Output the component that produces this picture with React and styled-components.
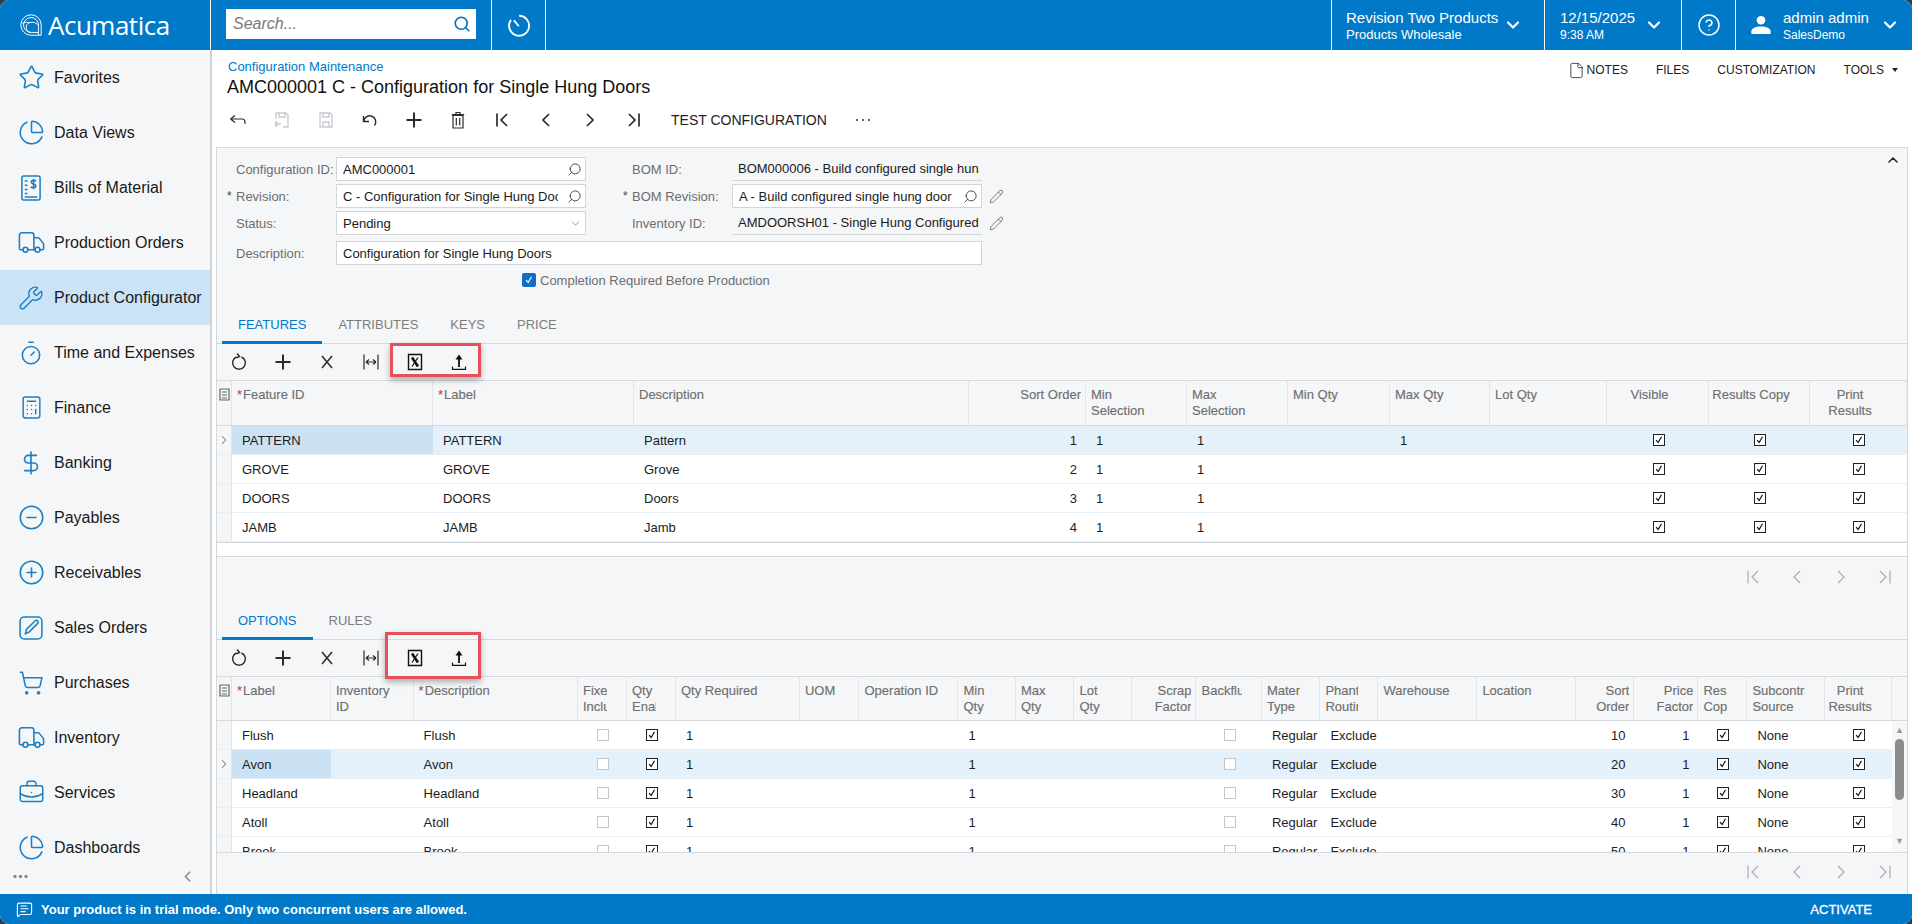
import styled, { createGlobalStyle } from "styled-components";
import {
  Star, ChartPie, Truck, Wrench, Timer, Calculator, DollarSign, CircleMinus, CirclePlus,
  ShoppingCart, BriefcaseBusiness, ChevronDown, ChevronUp, ChevronLeft, ChevronRight, CircleHelp,
  Search as SearchIcon, Pencil, File as FileIcon, MessageSquareText,
} from "lucide-react";

const GlobalStyle = createGlobalStyle`
  html, body { margin: 0; padding: 0; height: 100%; background: #2f3b47; }
  #root { height: 100%; }
  * { box-sizing: border-box; }
`;

const BLUE = "#0079c9";
const PANEL = "#f5f6f8";
const LINE = "#d6d9dc";

// ---------- small drawn icons ----------

const Glyph = styled.svg.attrs((p) => ({
  viewBox: "0 0 20 20",
  fill: p.fill || "none",
  stroke: p.stroke || "currentColor",
  strokeWidth: p.strokeWidth || 1.4,
}))`
  width: ${(p) => p.$size || 20}px;
  height: ${(p) => p.$size || 20}px;
  color: ${(p) => p.$color || "#2b2b2b"};
  flex: none;
`;

const BackGlyph = () => <Glyph strokeWidth={1.2}><path d="M2.5 9 7 5.5M2.5 9 7 12.5M2.5 9H14a3 3 0 0 1 3 3v2" /></Glyph>;
const SaveCloseGlyph = () => (
  <Glyph $color="#c8ccd0"><path d="M4 9V3h10l2 2v12h-5M7 3v4h6V3M3 14h6M3 14l2.5-2M3 14l2.5 2M4 11v6" /></Glyph>
);
const SaveGlyph = () => (
  <Glyph $color="#c8ccd0"><path d="M4 3h10l2 2v12H4zM7 3v4h6V3M7 17v-5h6v5" /></Glyph>
);
const UndoGlyph = () => <Glyph><path d="M3.5 6v5.5H9M3.8 11.2A6 6 0 1 1 14.5 15.5" /></Glyph>;
const PlusGlyph = () => <Glyph strokeWidth={2}><path d="M10 2.5v15M2.5 10h15" /></Glyph>;
const TrashGlyph = () => <Glyph strokeWidth={1.2}><path d="M5 5.5h10V18H5zM3.8 4.6h12.4M8 4.6V2.5h4v2.1M8.3 8v7.5M11.7 8v7.5" /></Glyph>;
const FirstGlyph = ({ color }) => <Glyph $color={color} strokeWidth={color ? 1.2 : 1.7}><path d="M5 3.5v13M15 4l-6 6 6 6" /></Glyph>;
const PrevGlyph = ({ color }) => <Glyph $color={color} strokeWidth={color ? 1.2 : 1.7}><path d="M13 4l-6 6 6 6" /></Glyph>;
const NextGlyph = ({ color }) => <Glyph $color={color} strokeWidth={color ? 1.2 : 1.7}><path d="M7 4l6 6-6 6" /></Glyph>;
const LastGlyph = ({ color }) => <Glyph $color={color} strokeWidth={color ? 1.2 : 1.7}><path d="M15 3.5v13M5 4l6 6-6 6" /></Glyph>;
const DotsGlyph = () => (
  <Glyph stroke="none" fill="currentColor"><circle cx="4" cy="10" r="1" /><circle cx="10" cy="10" r="1" /><circle cx="16" cy="10" r="1" /></Glyph>
);
const RefreshGlyph = () => <Glyph><path d="M7.5 5a6.4 6.4 0 1 0 5 0M8 1.5l2.6 3-3 1.4" /></Glyph>;
const CrossGlyph = () => <Glyph strokeWidth={1.5}><path d="M5 4 15 16M15 4 5 16" /></Glyph>;
const FitGlyph = () => <Glyph strokeWidth={1.2}><path d="M3 2.5v15M17 2.5v15M5 10h10M5 10l3-2.5M5 10l3 2.5M15 10l-3-2.5M15 10l-3 2.5" /></Glyph>;
const ExcelGlyph = () => (
  <Glyph $color="#111">
    <path d="M3.5 2.5h13v15h-13z" />
    <path d="M7 5.5 13 14.5" strokeWidth={2.6} />
    <path d="M13 5.5 7 14.5" strokeWidth={1.2} />
  </Glyph>
);
const UploadGlyph = () => (
  <Glyph $color="#111">
    <path d="M10 15V6" strokeWidth={1.8} />
    <path d="M10 2.5 13.5 7.5h-7z" fill="currentColor" stroke="none" />
    <path d="M3.5 14.5v2.8h13v-2.8" strokeWidth={1.2} />
  </Glyph>
);
const HistoryGlyph = () => (
  <Glyph $size={25} $color="#fff" strokeWidth={1.5}><path d="M10.5 2.2a8 8 0 1 1-6.5 3.3M10.2 10.6 6.3 5.8" /></Glyph>
);
const UserGlyph = () => (
  <Glyph $size={24} $color="#fff" stroke="none" fill="currentColor">
    <circle cx="10" cy="6" r="3.6" />
    <path d="M2 17.5v-2.2c0-2.6 3.4-4 8-4s8 1.4 8 4v2.2z" />
  </Glyph>
);
const BillsGlyph = () => (
  <Glyph $size={28} $color="#1b7fc4" strokeWidth={1.1}>
    <rect x="3.5" y="1.5" width="13" height="17" rx="1.4" />
    <path d="M5.5 5h2M5.5 8h2M5.5 11h2M5.5 14h2M5.5 16.5h9" />
    <path d="M13.5 5.2c-.6-.9-3.3-1-3.4.6-.1 1.7 3.6 1 3.4 2.9-.2 1.5-3 1.4-3.7.4M11.8 3.5v7.4" />
  </Glyph>
);
const SalesGlyph = () => (
  <Glyph $size={28} $color="#1b7fc4" strokeWidth={1.1}>
    <rect x="2.2" y="2.2" width="15.6" height="15.6" rx="3" />
    <path d="M6 14l.8-3 6-6c.7-.7 1.6-.7 2 0 .5.5.4 1.3-.2 1.9l-6 6z" />
  </Glyph>
);
const LogoGlyph = () => (
  <Glyph $size={24} $color="#fff" strokeWidth={0.8}>
    <path d="M18.5 18.5H10a8.5 8.5 0 1 1 8.5-8.5z" />
    <path d="M16.2 18.5V10A6.2 6.2 0 1 0 10 16.2" />
    <path d="M16.2 16.2H10.5a4.2 4.2 0 0 1-1.5-8.2c2.7-.9 5.5.2 7.2 2.2M2.8 8.5c2.5-1 4.6-.8 6.2-.5" />
  </Glyph>
);
const CheckGlyph = () => (
  <svg viewBox="0 0 12 12" width="10" height="10" fill="none" stroke="currentColor" strokeWidth="1.4"><path d="M2.5 6.2 5 9l4-7" /></svg>
);

// ---------- shell ----------

const Shell = styled.div`
  display: flex;
  flex-direction: column;
  height: 924px;
  background: #fff;
  border-radius: 9px;
  overflow: hidden;
  font-family: "Liberation Sans", Arial, sans-serif;
  font-size: 13px;
  color: #1c1c1c;
`;

const TopBar = styled.header`
  display: flex;
  height: 50px;
  flex: none;
  background: ${BLUE};
  color: #fff;
`;

const TopCell = styled.div`
  display: flex;
  align-items: center;
  flex: ${(p) => (p.$grow ? "1" : "none")};
  width: ${(p) => (p.$width ? `${p.$width}px` : "auto")};
  padding: ${(p) => p.$pad || "0"};
  justify-content: ${(p) => (p.$center ? "center" : "flex-start")};
  border-left: ${(p) => (p.$noLine ? "none" : "1px solid #fff")};
`;

const Logo = styled.div`
  display: flex;
  align-items: center;
  gap: 5px;
  font-family: "Open Sans", sans-serif;
  font-size: 26px;
  letter-spacing: -0.5px;
`;

const SearchBox = styled.div`
  display: flex;
  align-items: center;
  justify-content: space-between;
  width: 250px;
  height: 30px;
  background: #fff;
  padding: 0 5px 0 7px;
  font-size: 16px;
  font-style: italic;
  color: #7b7b7b;
  margin-top: -2px;
`;

const TopText = styled.div`
  flex: 1;
  display: flex;
  flex-direction: column;
  gap: 2px;
  white-space: nowrap;
  margin-left: ${(p) => p.$indent || 0}px;
`;

const TopMain = styled.div`
  font-size: 15px;
  line-height: 17px;
`;

const TopSub = styled.div`
  font-size: ${(p) => p.$size || 12}px;
  line-height: 14px;
`;

const Body = styled.div`
  display: flex;
  flex: 1;
  min-height: 0;
`;

const Footer = styled.footer`
  display: flex;
  align-items: center;
  height: 30px;
  flex: none;
  background: ${BLUE};
  color: #fff;
  padding: 0 40px 0 16px;
  gap: 8px;
  font-weight: bold;
  font-size: 13px;
`;

const Activate = styled.div`
  margin-left: auto;
  font-weight: normal;
  font-size: 13px;
  -webkit-text-stroke: 0.3px #fff;
`;

// ---------- sidebar ----------

const Sidebar = styled.aside`
  display: flex;
  flex-direction: column;
  width: 212px;
  flex: none;
  background: ${PANEL};
  border-right: 2px solid #cfd2d6;
`;

const NavList = styled.nav`
  flex: 1;
  min-height: 0;
  overflow: hidden;
`;

const NavItem = styled.div`
  display: flex;
  align-items: center;
  height: 55px;
  background: ${(p) => (p.$active ? "#cbe3f6" : "transparent")};
  font-size: 16px;
  color: #1a1a1a;
  white-space: nowrap;
`;

const NavIcon = styled.span`
  display: flex;
  align-items: center;
  justify-content: center;
  width: 54px;
  padding-left: 8px;
  flex: none;
  color: #1b7fc4;
`;

const SideFoot = styled.div`
  display: flex;
  align-items: center;
  justify-content: space-between;
  height: 30px;
  flex: none;
  padding: 0 14px 6px 12px;
  color: #8a8a8a;
`;

const navItems = [
  ["Favorites", <Star size={27} strokeWidth={1.4} />],
  ["Data Views", <ChartPie size={27} strokeWidth={1.4} />],
  ["Bills of Material", <BillsGlyph />],
  ["Production Orders", <Truck size={29} strokeWidth={1.3} />],
  ["Product Configurator", <Wrench size={26} strokeWidth={1.3} />, true],
  ["Time and Expenses", <Timer size={26} strokeWidth={1.4} />],
  ["Finance", <Calculator size={25} strokeWidth={1.4} />],
  ["Banking", <DollarSign size={26} strokeWidth={1.5} />],
  ["Payables", <CircleMinus size={27} strokeWidth={1.4} />],
  ["Receivables", <CirclePlus size={27} strokeWidth={1.4} />],
  ["Sales Orders", <SalesGlyph />],
  ["Purchases", <ShoppingCart size={26} strokeWidth={1.4} />],
  ["Inventory", <Truck size={29} strokeWidth={1.3} />],
  ["Services", <BriefcaseBusiness size={27} strokeWidth={1.3} />],
  ["Dashboards", <ChartPie size={27} strokeWidth={1.4} />],
];

// ---------- page header ----------

const Content = styled.main`
  flex: 1;
  min-width: 0;
  display: flex;
  flex-direction: column;
  padding: 0 4px;
`;

const PageHead = styled.div`
  height: 97px;
  flex: none;
  padding-top: 8px;
`;

const TitleRow = styled.div`
  display: flex;
  justify-content: space-between;
  height: 41px;
  padding-left: 12px;
`;

const Crumb = styled.div`
  font-size: 13px;
  line-height: 17px;
  color: ${BLUE};
`;

const Title = styled.h1`
  margin: 0;
  font-size: 18px;
  font-weight: normal;
  line-height: 24px;
  color: #111;
  margin-left: -1px;
`;

const HeadActions = styled.div`
  display: flex;
  align-items: center;
  gap: 28px;
  height: 16px;
  margin-top: 4px;
  padding-right: 10px;
  font-size: 12px;
  color: #1c1c1c;
`;

const HeadAction = styled.span`
  display: flex;
  align-items: center;
  gap: 2px;
`;

const Caret = styled.span`
  width: 0;
  height: 0;
  margin-left: 6px;
  border-left: 3.5px solid transparent;
  border-right: 3.5px solid transparent;
  border-top: 4px solid #222;
`;

const Toolbar = styled.div`
  display: flex;
  align-items: center;
  height: 36px;
  margin-top: ${(p) => p.$top || 0}px;
  position: relative;
  flex: none;
`;

const ToolBtn = styled.span`
  display: flex;
  align-items: center;
  justify-content: center;
  width: 44px;
  height: 36px;
  flex: none;
`;

const TextBtn = styled.span`
  font-size: 14px;
  color: #222;
  margin-left: 15px;
  margin-right: 14px;
  white-space: nowrap;
`;

const RedBox = styled.div`
  position: absolute;
  left: ${(p) => p.$left}px;
  top: ${(p) => p.$top}px;
  width: ${(p) => p.$width}px;
  height: ${(p) => p.$height}px;
  border: 3px solid #e5505a;
  box-shadow: 0 3px 6px rgba(0, 0, 0, 0.3);
  pointer-events: none;
`;

// ---------- form ----------

const Panel = styled.section`
  flex: 1;
  min-height: 0;
  display: flex;
  flex-direction: column;
  background: ${PANEL};
  border: 1px solid ${LINE};
  border-bottom: none;
  position: relative;
`;

const Collapse = styled.span`
  position: absolute;
  right: 6px;
  top: 4px;
  color: #222;
`;

const Form = styled.div`
  height: 159px;
  flex: none;
  padding: 9px 0 0 10px;
  display: flex;
  flex-direction: column;
  gap: 3px;
`;

const FormRow = styled.div`
  display: flex;
  height: 24px;
  flex: none;
  align-items: center;
  margin-top: ${(p) => p.$top || 0}px;
`;

const FieldLabel = styled.label`
  display: flex;
  width: 109px;
  flex: none;
  color: #6d6d6d;
  font-size: 13px;
  white-space: nowrap;
`;

const LabelStar = styled.span`
  width: 9px;
  flex: none;
  color: #444;
  font-size: 12px;
`;

const Field = styled.div`
  display: flex;
  align-items: center;
  width: ${(p) => p.$width || 250}px;
  height: 24px;
  flex: none;
  padding: 0 3px 0 6px;
  background: ${(p) => (p.$plain ? "transparent" : "#fff")};
  border: 1px solid #d3d6d9;
  border-width: ${(p) => (p.$plain ? "0 0 1px" : "1px")};
  color: #1a1a1a;
`;

const FieldText = styled.span`
  flex: 1;
  min-width: 0;
  overflow: hidden;
  white-space: nowrap;
  margin-right: ${(p) => p.$gap || 0}px;
`;

const FieldGap = styled.span`
  width: 37px;
  flex: none;
`;

const EditPencil = styled.span`
  display: flex;
  margin-left: 7px;
  color: #555;
`;

const FlippedSearch = styled(SearchIcon)`
  transform: scaleX(-1);
  color: #444;
  flex: none;
`;

const CheckRow = styled.div`
  display: flex;
  align-items: center;
  gap: 4px;
  margin: 5px 0 0 295px;
  height: 14px;
  color: #6d6d6d;
  white-space: nowrap;
`;

const BlueCheck = styled.span`
  display: flex;
  align-items: center;
  justify-content: center;
  width: 14px;
  height: 14px;
  background: #0f6fc6;
  border-radius: 2px;
  color: #fff;
`;

// ---------- tabs ----------

const Tabs = styled.div`
  display: flex;
  height: 37px;
  flex: none;
  padding-left: 5px;
  border-bottom: 1px solid ${LINE};
`;

const Tab = styled.div`
  display: flex;
  align-items: center;
  padding: 0 16px;
  height: 37px;
  font-size: 13px;
  color: ${(p) => (p.$active ? BLUE : "#7d7d7d")};
  border-bottom: 3px solid ${(p) => (p.$active ? BLUE : "transparent")};
`;

// ---------- grids ----------

const GridWrap = styled.div`
  flex: none;
  border-top: 1px solid ${LINE};
`;

const GridLine = styled.div`
  display: grid;
  grid-template-columns: 15px ${(p) => p.$cols};
  height: ${(p) => p.$height}px;
  background: ${(p) => (p.$selected ? "#e4f1fa" : p.$plainBg ? "transparent" : "#fff")};
  border-bottom: 1px solid ${(p) => (p.$head ? LINE : "#e6eff5")};
  overflow: hidden;
`;

const Gutter = styled.div`
  display: flex;
  align-items: ${(p) => (p.$head ? "flex-start" : "center")};
  justify-content: center;
  padding-top: ${(p) => (p.$head ? "7px" : "0")};
  background: ${PANEL};
  border-right: 1px solid #e1e4e7;
  color: #555;
`;

const headPad = { right: "6px 4px 0 0", center: "6px 16px 0 0" };

const HeadCell = styled.div`
  padding: ${(p) => headPad[p.$align] || "6px 19px 0 5px"};
  border-right: 1px solid #e4e6e9;
  min-width: 0;
`;

const HeadLines = styled.div`
  overflow: hidden;
  text-align: ${(p) => p.$align || "left"};
  font-size: 13px;
  line-height: 16px;
  color: #6f6f6f;
  -webkit-text-stroke: 0.15px #6f6f6f;
  white-space: nowrap;
`;

const HeadStar = styled.span`
  color: #e03c3c;
  margin-right: 1px;
`;

const BodyCell = styled.div`
  display: flex;
  align-items: center;
  justify-content: ${(p) => (p.$align === "right" ? "flex-end" : p.$align === "center" ? "center" : "flex-start")};
  padding: ${(p) => (p.$align === "right" ? "0 9px" : "0 9px 0 10px")};
  background: ${(p) => (p.$current ? "#cbe2f5" : "transparent")};
  overflow: hidden;
  white-space: nowrap;
  color: #1c1c1c;
`;

const Tick = styled.span`
  display: flex;
  align-items: center;
  justify-content: center;
  width: 12px;
  height: 12px;
  flex: none;
  background: #fff;
  border: 1px solid ${(p) => (p.$on ? "#222" : "#c4c7ca")};
  color: #111;
`;

const Filler = styled.div`
  height: 15px;
  flex: none;
  background: #fff;
  border-top: 1px solid ${LINE};
  border-bottom: 1px solid ${LINE};
`;

const Pager = styled.div`
  display: flex;
  justify-content: flex-end;
  height: ${(p) => p.$height}px;
  flex: none;
  padding-top: ${(p) => p.$top}px;
`;

const ScrollArea = styled.div`
  display: flex;
  height: 132px;
  flex: none;
  border-bottom: 1px solid ${LINE};
  overflow: hidden;
`;

const ScrollRows = styled.div`
  width: 1675px;
  flex: none;
`;

const ScrollBar = styled.div`
  flex: 1;
  display: flex;
  flex-direction: column;
  align-items: center;
  padding-top: 5px;
  color: #9a9a9a;
  font-size: 9px;
  line-height: 9px;
`;

const ScrollThumb = styled.div`
  width: 9px;
  height: 61px;
  margin: 4px 0 37px;
  background: #8c8c8c;
  border-radius: 5px;
`;

const featureCols = [
  { w: 201, h: ["Feature ID"], req: true },
  { w: 201, h: ["Label"], req: true },
  { w: 335, h: ["Description"] },
  { w: 117, h: ["Sort Order"], align: "right" },
  { w: 101, h: ["Min", "Selection"] },
  { w: 101, h: ["Max", "Selection"] },
  { w: 102, h: ["Min Qty"] },
  { w: 100, h: ["Max Qty"] },
  { w: 117, h: ["Lot Qty"] },
  { w: 102, h: ["Visible"], align: "center", cell: "center" },
  { w: 101, h: ["Results Copy"], align: "center", cell: "center" },
  { w: 97, h: ["Print", "Results"], align: "center", cell: "center" },
];

const featureRows = [
  ["PATTERN", "PATTERN", "Pattern", "1", "1", "1", "", "1", "", true, true, true],
  ["GROVE", "GROVE", "Grove", "2", "1", "1", "", "", "", true, true, true],
  ["DOORS", "DOORS", "Doors", "3", "1", "1", "", "", "", true, true, true],
  ["JAMB", "JAMB", "Jamb", "4", "1", "1", "", "", "", true, true, true],
];

const optionCols = [
  { w: 99, h: ["Label"], req: true },
  { w: 82.6, h: ["Inventory", "ID"] },
  { w: 164.4, h: ["Description"], req: true },
  { w: 49, h: ["Fixed", "Included"], cell: "center" },
  { w: 49, h: ["Qty", "Enabled"], cell: "center" },
  { w: 124, h: ["Qty Required"] },
  { w: 59.5, h: ["UOM"] },
  { w: 99, h: ["Operation ID"] },
  { w: 57.5, h: ["Min", "Qty"] },
  { w: 58.5, h: ["Max", "Qty"] },
  { w: 58, h: ["Lot", "Qty"] },
  { w: 64, h: ["Scrap", "Factor"], align: "right" },
  { w: 65.4, h: ["Backflush"], cell: "center" },
  { w: 58.5, h: ["Material", "Type"] },
  { w: 58, h: ["Phantom", "Routing"] },
  { w: 99, h: ["Warehouse"] },
  { w: 99, h: ["Location"] },
  { w: 58, h: ["Sort", "Order"], align: "right" },
  { w: 64, h: ["Price", "Factor"], align: "right" },
  { w: 49, h: ["Result", "Copy"], cell: "center" },
  { w: 78, h: ["Subcontract", "Source"] },
  { w: 66.5, h: ["Print", "Results"], align: "center", cell: "center" },
];

const optionRows = ["Flush", "Avon", "Headland", "Atoll", "Brook"].map((name, i) => [
  name, "", name, false, true, "1", "", "", "1", "", "", "", false,
  "Regular", "Exclude", "", "", String((i + 1) * 10), "1", true, "None", true,
]);

const colTemplate = (cols) => cols.map((c) => `${c.w}px`).join(" ");

function HeaderRow({ cols, height }) {
  return (
    <GridLine $cols={colTemplate(cols)} $height={height} $head $plainBg>
      <Gutter $head>
        <svg width="11" height="13" viewBox="0 0 11 13" fill="none" stroke="#666" strokeWidth="1.2">
          <path d="M1 1h9v11H1zM3 4h5M3 7h5M3 10h5" />
        </svg>
      </Gutter>
      {cols.map((c) => (
        <HeadCell key={c.h.join()} $align={c.align}>
          <HeadLines $align={c.align}>
            {c.h.map((line, i) => (
              <div key={line}>
                {c.req && i === 0 && <HeadStar>*</HeadStar>}
                {line}
              </div>
            ))}
          </HeadLines>
        </HeadCell>
      ))}
    </GridLine>
  );
}

function DataRow({ cols, values, selected }) {
  return (
    <GridLine $cols={colTemplate(cols)} $height={29} $selected={selected}>
      <Gutter>{selected && <ChevronRight size={14} strokeWidth={1.6} />}</Gutter>
      {values.map((v, i) => (
        <BodyCell key={i} $align={cols[i].cell || cols[i].align} $current={selected && i === 0}>
          {typeof v === "boolean" ? <Tick $on={v}>{v && <CheckGlyph />}</Tick> : v}
        </BodyCell>
      ))}
    </GridLine>
  );
}

function GridTools({ box }) {
  return (
    <Toolbar>
      <ToolBtn><RefreshGlyph /></ToolBtn>
      <ToolBtn><PlusGlyph /></ToolBtn>
      <ToolBtn><CrossGlyph /></ToolBtn>
      <ToolBtn><FitGlyph /></ToolBtn>
      <ToolBtn><ExcelGlyph /></ToolBtn>
      <ToolBtn><UploadGlyph /></ToolBtn>
      <RedBox $left={box.left} $top={box.top} $width={box.width} $height={box.height} />
    </Toolbar>
  );
}

function PagerIcons({ height, top }) {
  const c = "#a9adb1";
  return (
    <Pager $height={height} $top={top}>
      <ToolBtn><FirstGlyph color={c} /></ToolBtn>
      <ToolBtn><PrevGlyph color={c} /></ToolBtn>
      <ToolBtn><NextGlyph color={c} /></ToolBtn>
      <ToolBtn><LastGlyph color={c} /></ToolBtn>
    </Pager>
  );
}

export default function App() {
  return (
    <>
      <GlobalStyle />
      <Shell>
        <TopBar>
          <TopCell $width={210} $pad="0 0 0 19px" $noLine>
            <Logo><LogoGlyph />Acumatica</Logo>
          </TopCell>
          <TopCell $width={281} $pad="0 0 0 15px">
            <SearchBox>Search...<SearchIcon size={18} color="#0a6fb8" strokeWidth={2.2} /></SearchBox>
          </TopCell>
          <TopCell $width={54} $center><HistoryGlyph /></TopCell>
          <TopCell $grow />
          <TopCell $width={213} $pad="0 21px 0 14px">
            <TopText>
              <TopMain>Revision Two Products</TopMain>
              <TopSub $size={13}>Products Wholesale</TopSub>
            </TopText>
            <ChevronDown size={20} strokeWidth={2.6} />
          </TopCell>
          <TopCell $width={137} $pad="0 17px 0 15px">
            <TopText>
              <TopMain>12/15/2025</TopMain>
              <TopSub>9:38 AM</TopSub>
            </TopText>
            <ChevronDown size={20} strokeWidth={2.6} />
          </TopCell>
          <TopCell $width={54} $center><CircleHelp size={24} strokeWidth={1.5} /></TopCell>
          <TopCell $width={177} $pad="0 12px 0 13px">
            <UserGlyph />
            <TopText $indent={10}>
              <TopMain>admin admin</TopMain>
              <TopSub>SalesDemo</TopSub>
            </TopText>
            <ChevronDown size={20} strokeWidth={2.6} />
          </TopCell>
        </TopBar>

        <Body>
          <Sidebar>
            <NavList>
              {navItems.map(([label, icon, active]) => (
                <NavItem key={label} $active={active}>
                  <NavIcon>{icon}</NavIcon>
                  {label}
                </NavItem>
              ))}
            </NavList>
            <SideFoot>
              <Glyph $size={17} $color="#8a8a8a" stroke="none" fill="currentColor">
                <circle cx="3.5" cy="10" r="2" /><circle cx="10" cy="10" r="2" /><circle cx="16.5" cy="10" r="2" />
              </Glyph>
              <ChevronLeft size={17} strokeWidth={2.4} />
            </SideFoot>
          </Sidebar>

          <Content>
            <PageHead>
              <TitleRow>
                <div>
                  <Crumb>Configuration Maintenance</Crumb>
                  <Title>AMC000001 C - Configuration for Single Hung Doors</Title>
                </div>
                <HeadActions>
                  <HeadAction><FileIcon size={17} strokeWidth={1.1} />NOTES</HeadAction>
                  <HeadAction>FILES</HeadAction>
                  <HeadAction>CUSTOMIZATION</HeadAction>
                  <HeadAction>TOOLS<Caret /></HeadAction>
                </HeadActions>
              </TitleRow>
              <Toolbar $top={3}>
                <ToolBtn><BackGlyph /></ToolBtn>
                <ToolBtn><SaveCloseGlyph /></ToolBtn>
                <ToolBtn><SaveGlyph /></ToolBtn>
                <ToolBtn><UndoGlyph /></ToolBtn>
                <ToolBtn><PlusGlyph /></ToolBtn>
                <ToolBtn><TrashGlyph /></ToolBtn>
                <ToolBtn><FirstGlyph /></ToolBtn>
                <ToolBtn><PrevGlyph /></ToolBtn>
                <ToolBtn><NextGlyph /></ToolBtn>
                <ToolBtn><LastGlyph /></ToolBtn>
                <TextBtn>TEST CONFIGURATION</TextBtn>
                <ToolBtn><DotsGlyph /></ToolBtn>
              </Toolbar>
            </PageHead>

            <Panel>
              <Collapse><ChevronUp size={16} strokeWidth={2.2} /></Collapse>
              <Form>
                <FormRow>
                  <FieldLabel><LabelStar />Configuration ID:</FieldLabel>
                  <Field><FieldText>AMC000001</FieldText><FlippedSearch size={15} strokeWidth={1.5} /></Field>
                  <FieldGap />
                  <FieldLabel><LabelStar />BOM ID:</FieldLabel>
                  <Field $plain><FieldText>BOM000006 - Build configured single hung door</FieldText></Field>
                </FormRow>
                <FormRow>
                  <FieldLabel><LabelStar>*</LabelStar>Revision:</FieldLabel>
                  <Field><FieldText $gap={9}>C - Configuration for Single Hung Doors</FieldText><FlippedSearch size={15} strokeWidth={1.5} /></Field>
                  <FieldGap />
                  <FieldLabel><LabelStar>*</LabelStar>BOM Revision:</FieldLabel>
                  <Field><FieldText $gap={9}>A - Build configured single hung door</FieldText><FlippedSearch size={15} strokeWidth={1.5} /></Field>
                  <EditPencil><Pencil size={15} strokeWidth={1.2} /></EditPencil>
                </FormRow>
                <FormRow>
                  <FieldLabel><LabelStar />Status:</FieldLabel>
                  <Field><FieldText>Pending</FieldText><ChevronDown size={13} color="#777" strokeWidth={1.4} /></Field>
                  <FieldGap />
                  <FieldLabel><LabelStar />Inventory ID:</FieldLabel>
                  <Field $plain><FieldText>AMDOORSH01 - Single Hung Configured Door</FieldText></Field>
                  <EditPencil><Pencil size={15} strokeWidth={1.2} /></EditPencil>
                </FormRow>
                <FormRow $top={3}>
                  <FieldLabel><LabelStar />Description:</FieldLabel>
                  <Field $width={646}><FieldText>Configuration for Single Hung Doors</FieldText></Field>
                </FormRow>
                <CheckRow>
                  <BlueCheck><CheckGlyph /></BlueCheck>
                  Completion Required Before Production
                </CheckRow>
              </Form>

              <Tabs>
                <Tab $active>FEATURES</Tab>
                <Tab>ATTRIBUTES</Tab>
                <Tab>KEYS</Tab>
                <Tab>PRICE</Tab>
              </Tabs>
              <GridTools box={{ left: 173, top: -1, width: 91, height: 34 }} />
              <GridWrap>
                <HeaderRow cols={featureCols} height={45} />
                {featureRows.map((r, i) => (
                  <DataRow key={r[0]} cols={featureCols} values={r} selected={i === 0} />
                ))}
              </GridWrap>
              <Filler />
              <PagerIcons height={46} top={2} />

              <Tabs>
                <Tab $active>OPTIONS</Tab>
                <Tab>RULES</Tab>
              </Tabs>
              <GridTools box={{ left: 168, top: -8, width: 96, height: 47 }} />
              <GridWrap>
                <HeaderRow cols={optionCols} height={44} />
                <ScrollArea>
                  <ScrollRows>
                    {optionRows.map((r, i) => (
                      <DataRow key={r[0]} cols={optionCols} values={r} selected={i === 1} />
                    ))}
                  </ScrollRows>
                  <ScrollBar>
                    ▲
                    <ScrollThumb />
                    ▼
                  </ScrollBar>
                </ScrollArea>
              </GridWrap>
              <PagerIcons height={40} top={1} />
            </Panel>
          </Content>
        </Body>

        <Footer>
          <MessageSquareText size={17} strokeWidth={1.6} />
          Your product is in trial mode. Only two concurrent users are allowed.
          <Activate>ACTIVATE</Activate>
        </Footer>
      </Shell>
    </>
  );
}
